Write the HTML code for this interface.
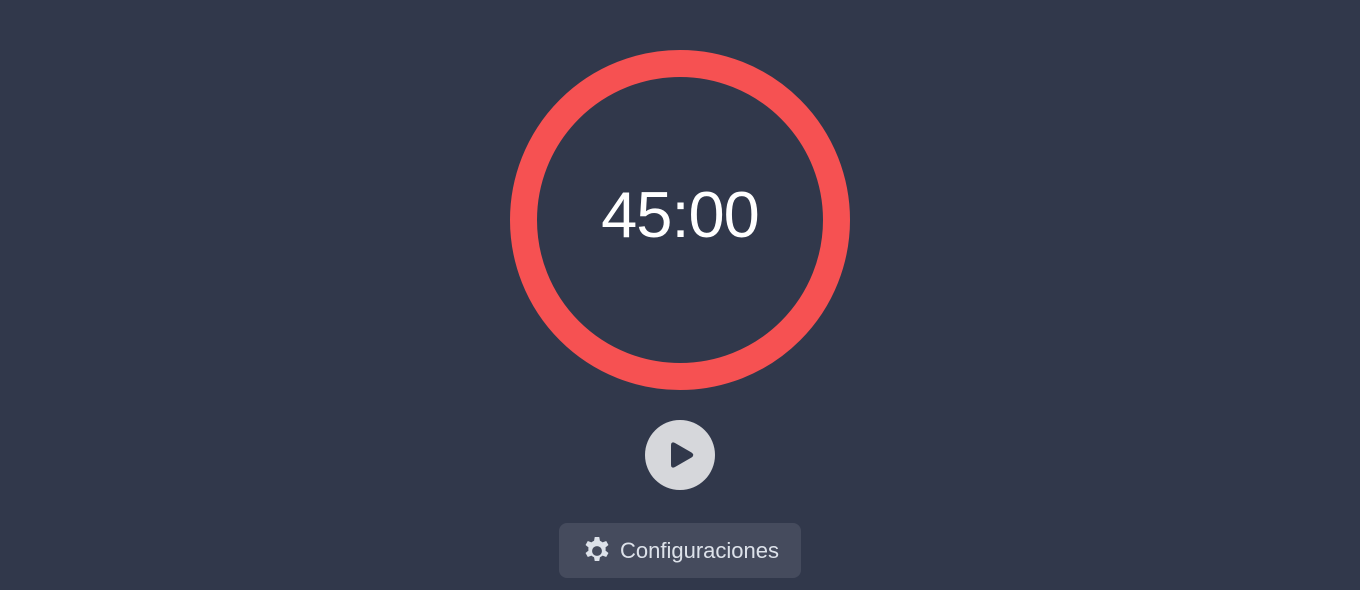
<!DOCTYPE html>
<html><head><style>
html,body{margin:0;padding:0;width:1360px;height:590px;background:#31384b;overflow:hidden;font-family:"Liberation Sans",sans-serif}
.ring{position:absolute;left:510px;top:50px;width:286px;height:286px;border:27px solid #f65152;border-radius:50%}
.time{position:absolute;left:510px;top:50px;width:340px;height:340px;line-height:330px;text-align:center;color:#fff;font-size:65px;letter-spacing:-1px}
.play{position:absolute;left:645px;top:420px;width:70px;height:70px;border-radius:50%;background:#d6d7db}
.btn{position:absolute;left:559px;top:523px;width:242px;height:55px;border-radius:8px;background:#454b5d;color:#dde2ea;font-size:22px}
.btn span{position:absolute;left:61px;top:15px}
</style></head><body>
<div class="ring"></div>
<div class="time">45:00</div>
<div class="play"><svg width="70" height="70" viewBox="0 0 70 70"><path d="M26 25.5 Q26 21 30 23 L46.5 32.5 Q50 35 46.5 37.5 L30 47 Q26 49 26 44.5 Z" fill="#31384b"/></svg></div>
<div class="btn">
<svg style="position:absolute;left:22px;top:12px" width="32" height="32" viewBox="0 0 24 24"><path fill="#dde2ea" fill-rule="evenodd" d="M10.3 1.5h3.4l.5 2.8a8 8 0 0 1 2 1.2l2.7-1 1.7 3-2.2 1.8a8 8 0 0 1 0 2.4l2.2 1.8-1.7 3-2.7-1a8 8 0 0 1-2 1.2l-.5 2.8h-3.4l-.5-2.8a8 8 0 0 1-2-1.2l-2.7 1-1.7-3 2.2-1.8a8 8 0 0 1 0-2.4L3.4 7.5l1.7-3 2.7 1a8 8 0 0 1 2-1.2zM12 8.3a3.7 3.7 0 1 0 0 7.4 3.7 3.7 0 0 0 0-7.4z"/></svg>
<span>Configuraciones</span></div>
</body></html>
